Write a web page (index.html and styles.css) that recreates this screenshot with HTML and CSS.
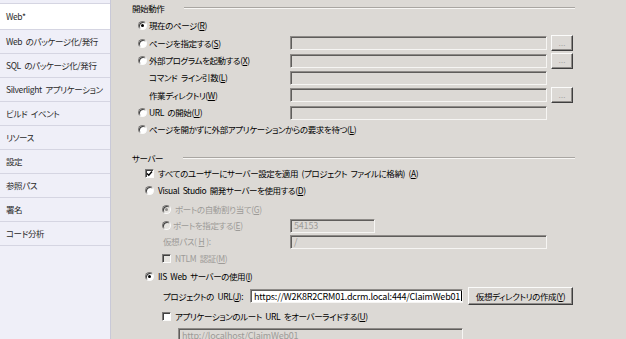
FILE: index.html
```html
<!DOCTYPE html>
<html lang="ja">
<head>
<meta charset="utf-8">
<link rel="stylesheet" href="styles.css">
</head>
<body>
<div class="app">
  <nav class="side">
    <div class="side-top"></div>
    <div class="side-item active">Web*</div>
    <div class="side-item">Web のパッケージ化/発行</div>
    <div class="side-item">SQL のパッケージ化/発行</div>
    <div class="side-item">Silverlight アプリケーション</div>
    <div class="side-item">ビルド イベント</div>
    <div class="side-item">リソース</div>
    <div class="side-item">設定</div>
    <div class="side-item">参照パス</div>
    <div class="side-item">署名</div>
    <div class="side-item">コード分析</div>
  </nav>
  <main class="page">
    <div class="group-head"><span>開始動作</span><i class="rule"></i></div>
    <div class="start">
      <div class="cell label"><span class="radio on"></span><span>現在のページ(<u>R</u>)</span></div>
      <div></div><div></div>

      <div class="cell label"><span class="radio"></span><span>ページを指定する(<u>S</u>)</span></div>
      <div class="cell"><span class="box"></span></div>
      <div class="cell"><span class="btn dots">…</span></div>

      <div class="cell label"><span class="radio"></span><span>外部プログラムを起動する(<u>X</u>)</span></div>
      <div class="cell"><span class="box"></span></div>
      <div class="cell"><span class="btn dots">…</span></div>

      <div class="cell label plain"><span>コマンド ライン引数(<u>L</u>)</span></div>
      <div class="cell"><span class="box"></span></div>
      <div></div>

      <div class="cell label plain"><span>作業ディレクトリ(<u>W</u>)</span></div>
      <div class="cell"><span class="box"></span></div>
      <div class="cell"><span class="btn dots">…</span></div>

      <div class="cell label"><span class="radio"></span><span>URL の開始(<u>U</u>)</span></div>
      <div class="cell"><span class="box"></span></div>
      <div></div>

      <div class="cell label wide"><span class="radio"></span><span>ページを開かずに外部アプリケーションからの要求を待つ(<u>L</u>)</span></div>
    </div>

    <div class="group-head server-head"><span>サーバー</span><i class="rule"></i></div>
    <div class="server">
      <div class="srow r-check"><span class="check on"><svg viewBox="0 0 7 7" width="7" height="7"><polyline points="1,3.5 2.8,5.3 6,1.5" fill="none" stroke="#000" stroke-width="1.4"/></svg></span><span>すべてのユーザーにサーバー設定を適用 (プロジェクト ファイルに格納) (<u>A</u>)</span></div>
      <div class="srow r-vs"><span class="radio"></span><span>Visual Studio 開発サーバーを使用する(<u>D</u>)</span></div>
      <div class="srow r-auto sub dis"><span class="radio on dis"></span><span>ポートの自動割り当て(<u>G</u>)</span></div>
      <div class="srow r-port sub dis"><span class="slabel"><span class="radio dis"></span><span>ポートを指定する(<u>E</u>)</span></span><span class="box port">54153</span></div>
      <div class="srow r-vpath sub2 dis"><span class="slabel">仮想パス(<u>H</u>):</span><span class="box vpath">/</span></div>
      <div class="srow r-ntlm sub dis"><span class="check dis"></span><span>NTLM 認証(<u>M</u>)</span></div>
      <div class="srow r-iis"><span class="radio on"></span><span>IIS Web サーバーの使用(<u>I</u>)</span></div>
      <div class="srow r-url sub2"><span class="ulabel">プロジェクトの URL(<u>J</u>):</span><span class="box white url">https://W2K8R2CRM01.dcrm.local:444/ClaimWeb01<i class="caret"></i></span><span class="btn text">仮想ディレクトリの作成(<u>Y</u>)</span></div>
      <div class="srow r-over sub"><span class="check"></span><span>アプリケーションのルート URL をオーバーライドする(<u>U</u>)</span></div>
      <div class="srow r-root"><span class="box root">http://localhost/ClaimWeb01</span></div>
    </div>
  </main>
</div>
</body>
</html>
```

FILE: styles.css
```css
* { box-sizing: border-box; margin: 0; padding: 0; }
html, body { width: 626px; height: 339px; overflow: hidden; }
body {
  font-family: "Noto Sans CJK JP", "Noto Sans", sans-serif;
  font-size: 8.5px;
  letter-spacing: -0.4px;
  word-spacing: 2px;
  font-feature-settings: "palt";
  color: #000;
  background: #dcd9d5;
  line-height: 1;
}
u { text-underline-offset: 1px; }
.app { display: flex; height: 339px; }

/* sidebar */
.side {
  width: 111px; flex: none;
  background: #efeff8;
  border-right: 1px solid #c9c9d8;
  display: flex; flex-direction: column;
}
.side-top { height: 4px; border-bottom: 1px solid #d5d5e2; }
.side-item {
  height: 24px; flex: none;
  border-bottom: 1px solid #d5d5e2;
  display: flex; align-items: center;
  padding-left: 6px;
  color: #2a2a2a;
  white-space: nowrap;
}
.side-item.active { height: 26px; background: #fff; }

/* main */
.page { flex: 1; padding: 0 51px 0 21px; display: flex; flex-direction: column; }
.group-head { height: 16px; display: flex; align-items: center; flex: none; }
.rule {
  flex: 1; margin-left: 20px; height: 2px;
  border-top: 1px solid #a9a6a2; border-bottom: 1px solid #f7f6f4;
}
.server-head { margin-top: 13px; }

.start {
  display: grid;
  grid-template-columns: 154px 257px 22px;
  column-gap: 4px;
  grid-template-rows: 18px 18px 17px 17px 18px 17px 16px;
}
.cell { display: flex; align-items: center; }
.label { padding-left: 6px; gap: 2px; white-space: nowrap; }
.label.plain { padding-left: 17px; }
.label.wide { grid-column: 1 / 4; }
.box {
  display: flex; align-items: center;
  width: 100%; height: 14px;
  padding-left: 3px;
  background: #dcd9d5;
  border: 1px solid;
  border-color: #8e8b88 #f6f5f3 #f6f5f3 #8e8b88;
  box-shadow: inset 1px 1px 0 #5f5d5b;
  color: #9d9b98;
  white-space: nowrap; overflow: hidden;
  font-size: 9px;
  letter-spacing: -0.2px;
  word-spacing: 0;
}
.box.white { background: #fff; color: #000; }
.btn {
  display: flex; align-items: center; justify-content: center;
  background: #dcd9d5;
  border: 1px solid;
  border-color: #fbfbfa #3f3f3f #3f3f3f #fbfbfa;
  box-shadow: inset -1px -1px 0 #8e8b88;
  white-space: nowrap;
}
.btn.dots { width: 22px; height: 16px; color: #9a9895; font-size: 7px; padding-top: 4px; letter-spacing: 0; }

/* radio & checkbox */
.radio {
  width: 9px; height: 9px; flex: none;
  border-radius: 50%;
  background: #fff;
  border: 1px solid;
  border-color: #7c7a78 #fbfbfa #fbfbfa #7c7a78;
  box-shadow: inset 1px 1px 0 #404040;
  display: flex; align-items: center; justify-content: center;
}
.radio.on::after {
  content: ""; width: 3px; height: 3px; border-radius: 50%; background: #000;
}
.radio.dis { background: #e6e4e0; }
.radio.dis.on::after { background: #8f8d8a; }
.check {
  width: 9px; height: 9px; flex: none;
  background: #fff;
  border: 1px solid;
  border-color: #7c7a78 #fbfbfa #fbfbfa #7c7a78;
  box-shadow: inset 1px 1px 0 #404040;
  display: flex; align-items: center; justify-content: center;
}
.check.dis { background: #e6e4e0; }

/* server rows */
.server { display: flex; flex-direction: column; }
.srow { display: flex; align-items: center; white-space: nowrap; gap: 4px; padding-left: 13px; flex: none; }
.srow.sub { padding-left: 30px; }
.srow.sub2 { padding-left: 31px; }
.dis { color: #9d9b98; }
.r-check { height: 14px; }
.r-vs { height: 20px; }
.r-auto { height: 18px; }
.r-port { height: 15px; }
.r-vpath { height: 17px; }
.r-ntlm { height: 17px; }
.r-iis { height: 18px; }
.r-url { height: 22px; }
.r-over { height: 18px; }
.r-root { padding-left: 46px; padding-top: 3px; }

.slabel { display: flex; align-items: center; gap: 2px; flex: none; }
.r-port .slabel { width: 124px; }
.r-vpath .slabel { width: 123px; }
.box.port { width: 85px; }
.box.vpath { width: 257px; }
.ulabel { width: 83px; flex: none; }
.box.url { width: 213px; height: 14px; }
.caret { display: inline-block; width: 1px; height: 10px; background: #000; margin-left: 1px; }
.btn.text { width: 105px; height: 18px; margin-left: 1px; }
.box.root { width: 285px; height: 14px; }
```
